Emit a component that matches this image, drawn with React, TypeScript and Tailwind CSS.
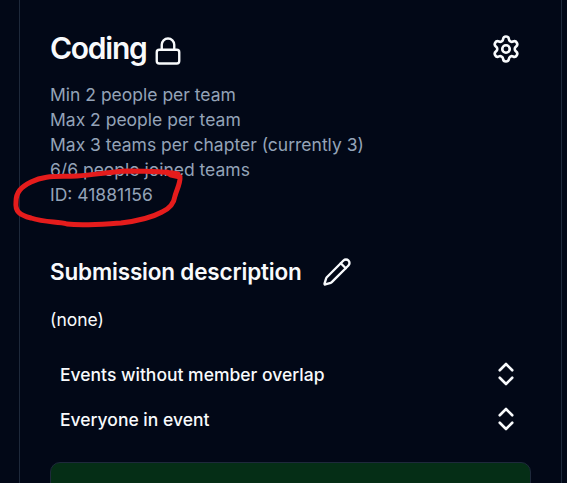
import { ChevronsUpDown, Lock, Pencil, Settings } from "lucide-react";

const details = [
  "Min 2 people per team",
  "Max 2 people per team",
  "Max 3 teams per chapter (currently 3)",
  "6/6 people joined teams",
  "ID: 41881156",
];

function Collapsible({ label }: { label: string }) {
  return (
    <button className="flex h-[45px] w-full items-center justify-between pr-[10px] pl-[10px] text-[17.5px] font-medium">
      <span className="pt-[2px]">{label}</span>
      <ChevronsUpDown size={30} strokeWidth={2.1} className="mb-[2px]" />
    </button>
  );
}

export default function App() {
  return (
    <div className="relative h-[483px] w-[567px] overflow-hidden bg-[#020817] pr-[5px] pl-[19px] font-['Inter',sans-serif] text-[#f8fafc]">
      <main className="h-full border-x border-[#1e293b] px-[30px] pt-[34px]">
        <header className="flex h-[30px] items-center justify-between pr-[10px]">
          <h3 className="flex items-center gap-[6px] text-[30px] leading-[30px] font-semibold tracking-[-1.25px]">
            <span className="-mt-[2px]">Coding</span>
            <Lock size={30} strokeWidth={1.9} className="mt-[4px]" />
          </h3>
          <Settings size={30} strokeWidth={2.1} />
        </header>
        <div className="mt-[18px] text-[17.5px] leading-[25px] text-[#94a3b8]">
          {details.map((line) => (
            <p key={line}>{line}</p>
          ))}
        </div>
        <section className="mt-[45px]">
          <div className="flex h-[40px] items-center gap-[20px]">
            <h4 className="text-[22.5px] leading-[30px] font-semibold tracking-[-0.18px]">Submission description</h4>
            <Pencil size={30} strokeWidth={1.9} />
          </div>
          <p className="mt-[15px] text-[17.5px] leading-[25px]">(none)</p>
        </section>
        <div className="mt-[20px]">
          <Collapsible label="Events without member overlap" />
          <Collapsible label="Everyone in event" />
        </div>
        <div className="mt-[20px] h-[60px] rounded-[10px] border border-[#1e293b] bg-[#052e16]" />
      </main>
      <svg className="pointer-events-none absolute inset-0" width="567" height="483" fill="none" stroke="#e51c1c" strokeWidth="5" strokeLinecap="round" strokeLinejoin="round">
        <path d="M178 174C165 171 145 171 127 171C107 172 95 175 77 176C57 177 45 175 31 182C21 187 16 192 16 202C15 211 19 215 31 218C46 223 58 221 67 224C84 226 103 224 121 223C137 221 151 218 162 212C171 208 174 203 175 196C177 189 180 184 180 178C180 175 174 174 166 172L171 175L180 177" />
      </svg>
    </div>
  );
}
